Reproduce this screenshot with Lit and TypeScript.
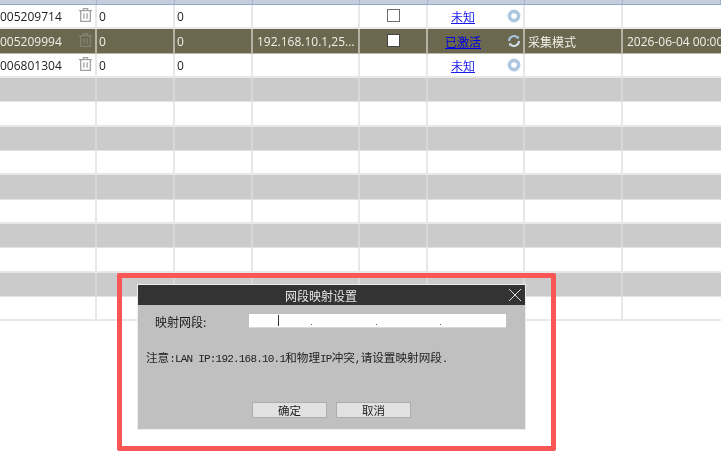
import { LitElement, html, css, svg, unsafeCSS } from "lit";
import { customElement } from "lit/decorators.js";

const CJK = unsafeCSS(`"Microsoft YaHei","Noto Sans CJK SC",sans-serif`);
const COLS = unsafeCSS(`97px 78px 78px 107px 68px 97px 98px 1fr`);

const trash = svg`<svg class="trash" width="13" height="14" viewBox="0 0 13 14" fill="none" stroke="currentColor" stroke-width="1.3">
  <path d="M0 2.6h13M4.4 2.6V.7h4.2v1.9M1.7 2.6v10.7h9.6V2.6M4.9 5.2v5.6M8.1 5.2v5.6"/></svg>`;

const ring = (active: boolean) => active
  ? svg`<svg width="14" height="14" viewBox="0 0 14 14" fill="none"><path d="M2 7a5 5 0 0 1 8.6-3.4" stroke="#a9c8e6" stroke-width="2"/><path d="M12 7a5 5 0 0 1-8.6 3.4" stroke="#d5e3f0" stroke-width="2"/><path d="M9.5 5l2.6-.4L11.6 1.6z" fill="#a9c8e6"/><path d="M4.5 9l-2.6.4.5 3z" fill="#d5e3f0"/></svg>`
  : svg`<svg width="14" height="14" viewBox="0 0 14 14" fill="none"><circle cx="7" cy="7" r="4.6" stroke="#afc8e2" stroke-width="3.6"/></svg>`;

type Row = { id?: string; ip?: string; link?: string; mode?: string; date?: string; sel?: boolean };
const rows: Row[] = [
  { id: "005209714", link: "未知" },
  { id: "005209994", ip: "192.168.10.1,25...", link: "已激活", mode: "采集模式", date: "2026-06-04 00:00:00", sel: true },
  { id: "006801304", link: "未知" },
  {}, {}, {}, {}, {}, {}, {}, {}, {}, {},
];

@customElement("app-root")
export class AppRoot extends LitElement {
  static styles = css`
    :host { display: block; position: relative; width: 721px; height: 454px; overflow: hidden; background: #fff;
      font-family: "Open Sans", ${CJK}; font-size: 12px; color: #222; filter: blur(0.3px); }
    .head { height: 5px; box-sizing: border-box; background: #c6cedd; border-bottom: 1px solid #8fa9c9; display: grid; grid-template-columns: ${COLS}; }
    .head span { border-right: 1px solid #a3b5cf; }
    .row { height: 24.35px; box-sizing: border-box; display: grid; grid-template-columns: ${COLS};
      border-bottom: 2px solid #e8e8e8; align-items: stretch; }
    .row.alt { background: #cbcbcb; border-bottom: 1px solid #e2e2e2; }
    .row.sel { background: #6b684f; color: #f0f0e8; border-bottom: 1px solid #b9b7a6; }
    .cell { border-right: 2px solid #e8e8e8; display: flex; align-items: center; min-width: 0; white-space: nowrap; overflow: hidden; padding-left: 2px; padding-top: 1px; }
    .row.sel .cell { border-right-color: #b4b2a0; }
    .row.alt .cell { border-right-color: #d8d8d8; }
    .idc { padding-left: 0; justify-content: space-between; padding-right: 3px; }
    .trash { color: #a2a2a2; margin-bottom: 3px; flex: none; }
    .sel .trash { color: #85826f; }
    .ip { padding-left: 4px; }
    .center { justify-content: center; padding-left: 0; }
    .check { width: 11px; height: 11px; border: 1px solid #6e6e6e; background: #fff; margin-bottom: 2px; }
    .sel .check { border-color: #444; }
    .linkc { padding-left: 0; }
    .linkc a { color: #1a1aee; text-decoration: underline; font-family: ${CJK}; font-size: 12px; flex: 1; text-align: center; padding-right: 9px; }
    .sel .linkc a { color: #0000e0; }
    .linkc svg { margin-right: 2px; margin-bottom: 1px; flex: none; }
    .mode { font-family: ${CJK}; font-size: 12px; padding-left: 3px; }
    .date { padding-left: 4px; border-right: none; }

    .mark { position: absolute; left: 117px; top: 273px; width: 439px; height: 178px; box-sizing: border-box; border: 5px solid #fb5656; border-radius: 2px; }
    .dialog { position: absolute; left: 138px; top: 285px; width: 387px; height: 144px; box-sizing: border-box; background: #c0c0c0;
      outline: 1px solid #ededed; display: flex; flex-direction: column; color: #1c1c1c;
      font-family: "Noto Sans CJK SC", sans-serif; font-size: 12px; }
    .title { height: 20px; background: #333; color: #e6e6e6; display: flex; align-items: center; justify-content: center; position: relative; font-size: 12px; flex: none; padding-right: 21px; }
    .close { position: absolute; right: 3px; top: 3px; }
    .body { flex: 1; display: flex; flex-direction: column; }
    .field { display: flex; align-items: center; margin-top: 9px; height: 14px; padding-left: 17px; }
    .field label { width: 94px; flex: none; }
    .ipbox { width: 257px; height: 14px; background: #fff; position: relative; display: grid; grid-template-columns: repeat(4, 1fr); flex: none; border-bottom: 1px solid #d8d8d8; box-sizing: border-box; }
    .caret { position: absolute; left: 29px; top: 1px; width: 1px; height: 11px; background: #333; }
    .dot { position: relative; }
    .dot i { position: absolute; right: 1px; bottom: 2px; width: 1px; height: 1px; background: #666; }
    .note { margin: 21px 0 0 8px; font-size: 11.6px; white-space: nowrap; color: #222; }
    .note span { font-family: "Liberation Mono", monospace; font-size: 11px; letter-spacing: -0.8px; }
    .btns { margin-top: auto; margin-bottom: 11px; display: flex; justify-content: center; gap: 9px; }
    .btn { width: 75px; height: 16px; box-sizing: border-box; background: #e1e1e1; border: 1px solid #adadad; display: flex; align-items: center; justify-content: center; font-size: 11.5px; }
  `;

  render() {
    return html`
      <div class="head">${Array.from({ length: 8 }, () => html`<span></span>`)}</div>
      ${rows.map((r, i) => {
        const cls = `row${r.sel ? " sel" : ""}${i >= 3 && i % 2 === 1 ? " alt" : ""}`;
        return html`<div class=${cls}>
          <div class="cell idc">${r.id ? html`<span>${r.id}</span>${trash}` : ""}</div>
          <div class="cell">${r.id ? "0" : ""}</div>
          <div class="cell">${r.id ? "0" : ""}</div>
          <div class="cell ip">${r.ip ?? ""}</div>
          <div class="cell center">${i < 2 ? html`<span class="check"></span>` : ""}</div>
          <div class="cell linkc">${r.link ? html`<a href="#">${r.link}</a>${ring(!!r.sel)}` : ""}</div>
          <div class="cell mode">${r.mode ?? ""}</div>
          <div class="cell date">${r.date ?? ""}</div>
        </div>`;
      })}
      <div class="mark"></div>
      <div class="dialog">
        <div class="title">网段映射设置
          <svg class="close" width="14" height="14" viewBox="0 0 14 14" stroke="#ddd" stroke-width="1"><path d="M1 1l12 12M13 1L1 13"/></svg>
        </div>
        <div class="body">
          <div class="field">
            <label>映射网段:</label>
            <div class="ipbox"><span class="caret"></span>
              <span class="dot"><i></i></span><span class="dot"><i></i></span><span class="dot"><i></i></span><span></span>
            </div>
          </div>
          <div class="note">注意<span>:LAN IP:192.168.10.1</span>和物理<span>IP</span>冲突<span>,</span>请设置映射网段<span>.</span></div>
          <div class="btns"><div class="btn">确定</div><div class="btn">取消</div></div>
        </div>
      </div>
    `;
  }
}
